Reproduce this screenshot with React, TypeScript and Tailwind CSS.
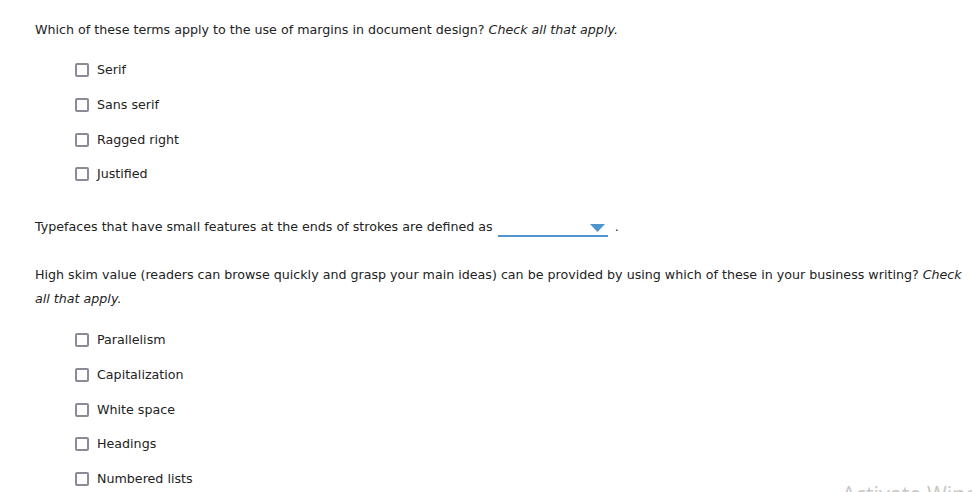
import React from 'react'

function Checkbox({ label }: { label: string }) {
  return (
    <label className="flex h-[34.67px] items-center">
      <span className="ml-[40px] inline-block h-[14px] w-[14px] rounded-[2px] border-2 border-[#8b8b97] bg-white" />
      <span className="ml-[8px]">{label}</span>
    </label>
  )
}

function Dropdown() {
  return (
    <span className="relative ml-[5px] inline-block h-[19px] w-[110px] border-b-2 border-[#4f94cd] align-[-6px]">
      <svg className="absolute right-[3px] top-[6px]" width="15" height="8" viewBox="0 0 15 8">
        <polygon points="0,0 15,0 7.5,8" fill="#4f94cd" />
      </svg>
    </span>
  )
}

const firstOptions = ['Serif', 'Sans serif', 'Ragged right', 'Justified']
const secondOptions = ['Parallelism', 'Capitalization', 'White space', 'Headings', 'Numbered lists']

export default function App() {
  return (
    <div
      className="relative h-[492px] w-[972px] overflow-hidden bg-white pl-[35px] pr-[8px] pt-[17.5px] text-[12.67px] leading-[24px] text-[#222]"
      style={{ fontFamily: '"DejaVu Sans", Verdana, sans-serif' }}
    >
      <p>
        Which of these terms apply to the use of margins in document design? <i>Check all that apply.</i>
      </p>
      <div className="mt-[11.67px]">
        {firstOptions.map((o) => (
          <Checkbox key={o} label={o} />
        ))}
      </div>

      <p className="mt-[23.67px]">
        Typefaces that have small features at the ends of strokes are defined as
        <Dropdown />
        <span className="ml-[7px]">.</span>
      </p>

      <p className="mt-[24px]">
        High skim value (readers can browse quickly and grasp your main ideas) can be provided by using which of
        these in your business writing? <i>Check all that apply.</i>
      </p>
      <div className="mt-[11.67px]">
        {secondOptions.map((o) => (
          <Checkbox key={o} label={o} />
        ))}
      </div>

      <div
        className="absolute left-[842px] top-[480px] whitespace-nowrap text-[21.5px] leading-[28px] text-[#c8c8c8]"
        style={{ fontFamily: '"Open Sans", "Noto Sans", sans-serif' }}
      >
        Activate Windows
      </div>
    </div>
  )
}
